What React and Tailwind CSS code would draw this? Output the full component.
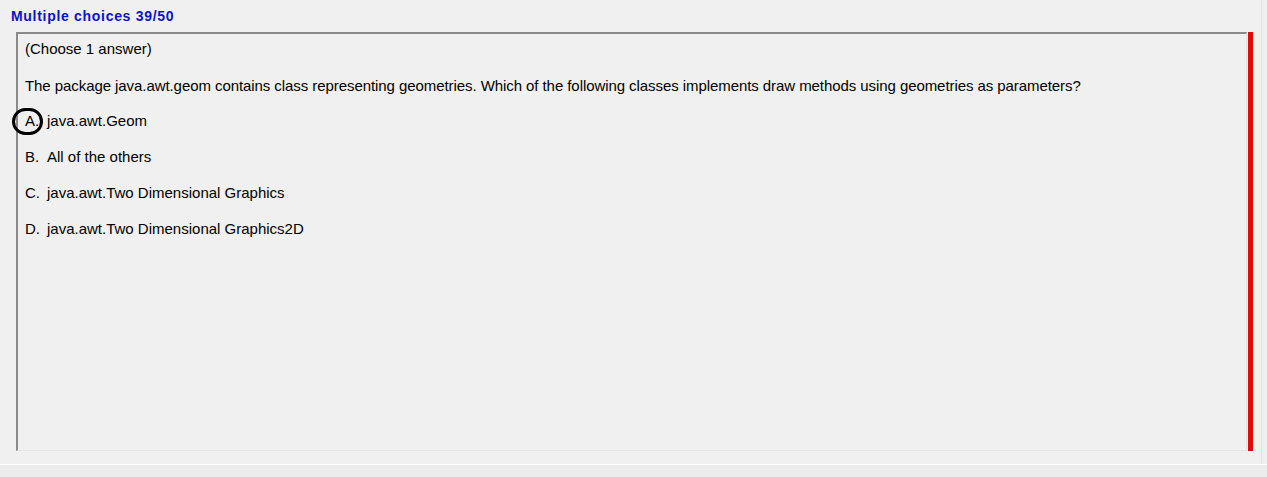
import React from 'react';

const options = [
    { key: 'A.', text: 'java.awt.Geom', chosen: true },
    { key: 'B.', text: 'All of the others' },
    { key: 'C.', text: 'java.awt.Two Dimensional Graphics' },
    { key: 'D.', text: 'java.awt.Two Dimensional Graphics2D' },
];

const App = () => {
    return (
        <div className="w-[1267px] h-[477px] bg-[#f0f0f0] flex flex-col overflow-hidden" style={{ fontFamily: '"Liberation Sans", Arial, sans-serif' }}>
            <div className="h-[465px] shrink-0 border-b border-white flex">
                <div className="w-[1262px] border-r border-[#e2e2e2] flex flex-col">
                    <div className="pl-[11px] pt-[8px] h-[32px] text-[14px] tracking-[0.7px] font-bold text-[#0a14c8] leading-[16px]">
                        Multiple choices 39/50
                    </div>
                    <div className="flex ml-[16px] h-[419px]">
                        {/* Question box */}
                        <div className="w-[1231px] border-t-2 border-l-2 border-t-[#8a8a8a] border-l-[#8a8a8a] border-b border-r border-b-[#e4e4e4] border-r-[#e4e4e4] pl-[7px] pt-[6px] text-[15px] text-black leading-[17px]">
                            <p>(Choose 1 answer)</p>
                            <p className="mt-[20px] tracking-[-0.07px]">
                                The package java.awt.geom contains class representing geometries. Which of the following classes implements draw methods using geometries as parameters?
                            </p>
                            <div className="mt-[18px] flex flex-col gap-[19px]">
                                {options.map(o => (
                                    <div key={o.key} className="flex relative">
                                        <span className="w-[22px]">{o.key}</span>
                                        <span>{o.text}</span>
                                        {o.chosen && (
                                            <span className="absolute left-[-13px] top-[-4px] w-[31px] h-[27px] rounded-full border-[3.5px] border-black" />
                                        )}
                                    </div>
                                ))}
                            </div>
                        </div>
                        <div className="w-[5px] ml-[1px] bg-[#e00a0a]" />
                    </div>
                </div>
            </div>
            <div className="flex-1 bg-[#ececec]" />
        </div>
    );
};

export default App;
